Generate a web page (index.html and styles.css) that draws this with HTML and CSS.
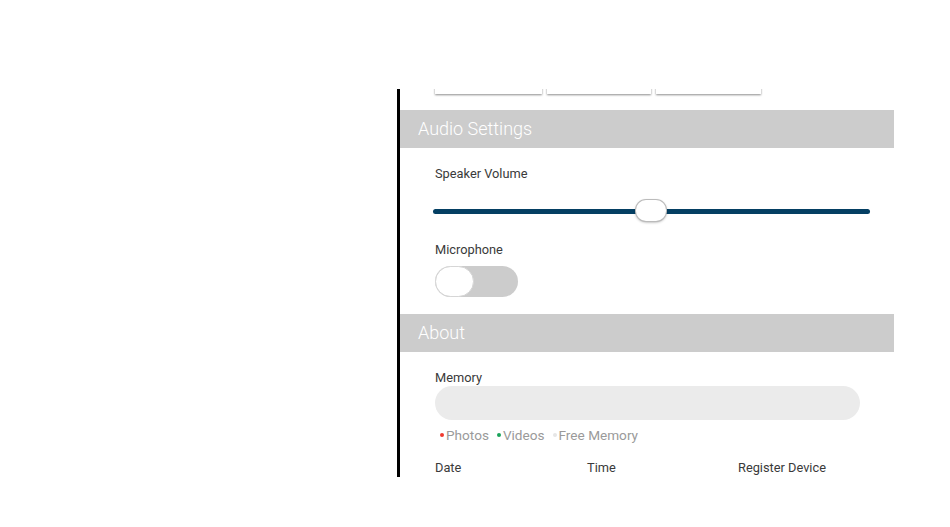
FILE: index.html
```html
<!DOCTYPE html>
<html>
<head>
<meta charset="utf-8">
<link rel="stylesheet" href="styles.css">
</head>
<body>
<div class="panel">
  <div class="cards">
    <div class="card c1"></div>
    <div class="card c2"></div>
    <div class="card c3"></div>
  </div>
  <div class="section-head head-audio">Audio Settings</div>
  <div class="section-body">
    <div class="label l-speaker">Speaker Volume</div>
    <div class="slider">
      <div class="track"></div>
      <div class="thumb"></div>
    </div>
    <div class="label l-mic">Microphone</div>
    <div class="toggle"><div class="knob"></div></div>
  </div>
  <div class="section-head head-about">About</div>
  <div class="section-body">
    <div class="label l-memory">Memory</div>
    <div class="membar"></div>
    <div class="legend">
      <span class="item"><span class="dot red"></span>Photos</span>
      <span class="item"><span class="dot green"></span>Videos</span>
      <span class="item"><span class="dot light"></span>Free Memory</span>
    </div>
    <div class="table-head">
      <span>Date</span>
      <span>Time</span>
      <span>Register Device</span>
    </div>
  </div>
</div>
</body>
</html>
```
FILE: styles.css
```css
html, body {
  margin: 0;
  padding: 0;
  background: #fff;
  font-family: Roboto, "Liberation Sans", sans-serif;
}
.panel {
  margin-left: 397px;
  margin-top: 89px;
  width: 494px;
  height: 388px;
  border-left: 3px solid #000;
  overflow: hidden;
}
.cards {
  display: flex;
  gap: 5px;
  padding-left: 35px;
  margin-top: -35px;
}
.card {
  height: 40px;
  background: #fff;
  box-shadow: 0 1px 2px rgba(0,0,0,0.45);
}
.c1 { width: 107px; }
.c2 { width: 104px; }
.c3 { width: 105px; }
.section-head {
  height: 38px;
  background: #cccccc;
  color: #fff;
  font-size: 18px;
  font-weight: 300;
  line-height: 38px;
  padding-left: 18px;
}
.head-audio { margin-top: 16px; }
.head-about { margin-top: 17px; }
.section-body {
  padding-left: 35px;
  padding-right: 24px;
}
.label {
  font-size: 12.8px;
  line-height: 14px;
  color: #3a3a3a;
}
.l-speaker { margin-top: 19px; }
.l-mic { margin-top: 19px; }
.l-memory { margin-top: 19px; }
.slider {
  position: relative;
  height: 26px;
  margin-top: 17px;
  margin-left: -2px;
  width: 437px;
}
.track {
  position: absolute;
  left: 0;
  right: 0;
  top: 11px;
  height: 5px;
  border-radius: 3px;
  background: #043f63;
}
.thumb {
  position: absolute;
  left: 203px;
  top: 2px;
  width: 30px;
  height: 21px;
  border-radius: 10px;
  background: #fff;
  box-shadow: 0 0 0 1px #bbb, 0 1px 3px rgba(0,0,0,0.45);
}
.toggle {
  margin-top: 9px;
  width: 83px;
  height: 31px;
  border-radius: 16px;
  background: #cccccc;
  display: flex;
  align-items: stretch;
}
.knob {
  width: 39px;
  border-radius: 16px;
  background: #fff;
  border: 1px solid #d6d6d6;
  box-sizing: border-box;
}
.membar {
  margin-top: 1px;
  width: 425px;
  height: 34px;
  border-radius: 17px;
  background: #ebebeb;
}
.legend {
  margin-top: 8px;
  margin-left: 5px;
  font-size: 13.6px;
  line-height: 14px;
  color: #9a9a9a;
  display: flex;
  gap: 8px;
}
.item {
  display: flex;
  align-items: center;
  gap: 2px;
}
.dot {
  width: 4px;
  height: 4px;
  border-radius: 50%;
  display: inline-block;
}
.red { background: #f03a2e; }
.green { background: #1aa35a; }
.light { background: #e6e6e6; }
.table-head {
  margin-top: 19px;
  display: grid;
  grid-template-columns: 152px 151px auto;
  font-size: 12.8px;
  line-height: 14px;
  color: #3a3a3a;
}
```
